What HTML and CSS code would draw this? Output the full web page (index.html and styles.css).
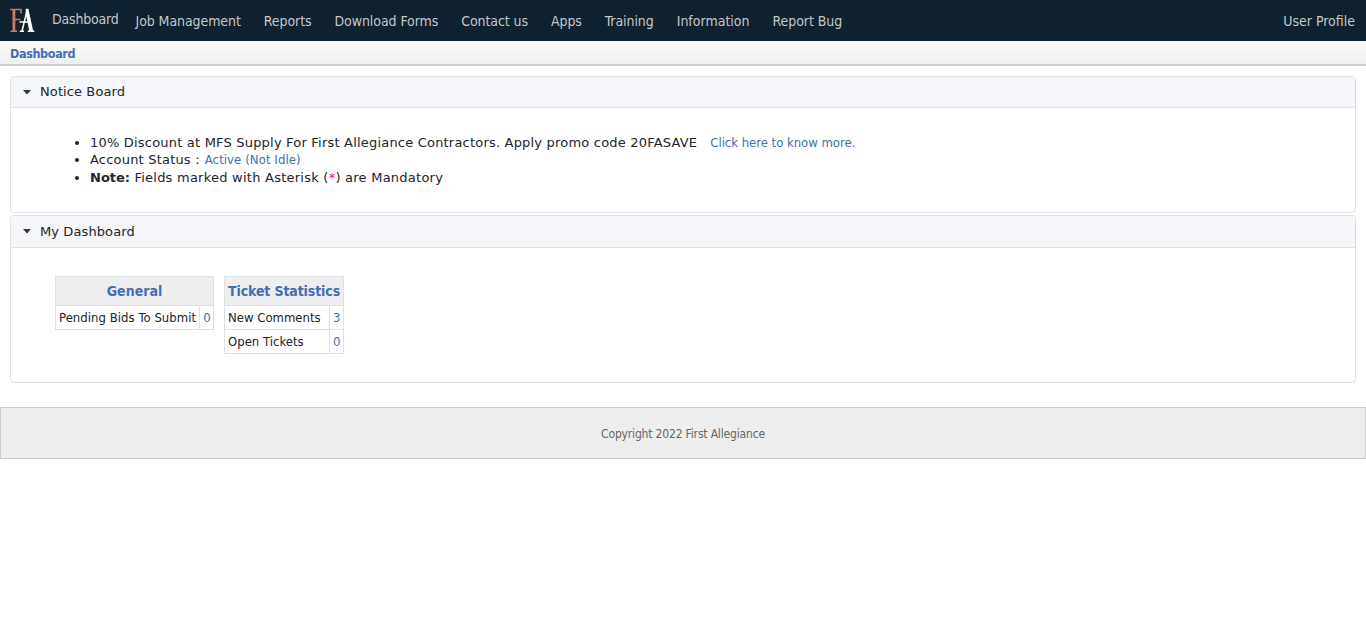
FILE: index.html
```html
<!DOCTYPE html>
<html lang="en">
<head>
<meta charset="utf-8">
<title>Dashboard</title>
<link rel="stylesheet" href="styles.css">
</head>
<body>
<header class="topbar">
  <svg class="logo" viewBox="0 0 26 26" width="26" height="26" aria-label="FA">
    <path d="M1 1.6H12V5.5M1.5 23.3H8M6 11.5H11.5" fill="none" stroke="#c97a5c" stroke-width="1.5"/>
    <path d="M4.9 2V23.5" stroke="#c97a5c" stroke-width="2.9"/>
    <path d="M13 23L18 3M10.8 23.3H15M18.8 23.3H25.3M10.5 14H21" fill="none" stroke="#fff" stroke-width="1.5"/>
    <path d="M16.8 .8H19.4L24.3 23.5H20.4L16.6 5Z" fill="#fff"/>
  </svg>
  <nav class="nav">
    <a class="nav-item active">Dashboard</a>
    <a class="nav-item">Job Management</a>
    <a class="nav-item">Reports</a>
    <a class="nav-item">Download Forms</a>
    <a class="nav-item">Contact us</a>
    <a class="nav-item">Apps</a>
    <a class="nav-item">Training</a>
    <a class="nav-item wide">Information</a>
    <a class="nav-item">Report Bug</a>
  </nav>
  <a class="nav-item wide">User Profile</a>
</header>
<div class="crumb">Dashboard</div>
<main class="content">
  <section class="panel">
    <h2 class="panel-head"><svg class="caret" viewBox="0 0 8 4" width="8" height="4"><path d="M0 0H8L4.5 4H3.5Z" fill="#343a40"/></svg><span>Notice Board</span></h2>
    <ul class="notices">
      <li><span>10% Discount at MFS Supply For First Allegiance Contractors. Apply promo code 20FASAVE</span><a class="link more">Click here to know more.</a></li>
      <li class="status"><span>Account Status :</span><a class="link idle">Active (Not Idle)</a></li>
      <li><b>Note:</b> Fields marked with Asterisk (<span class="star">*</span>) are Mandatory</li>
    </ul>
  </section>
  <section class="panel">
    <h2 class="panel-head tall"><svg class="caret" viewBox="0 0 8 4" width="8" height="4"><path d="M0 0H8L4.5 4H3.5Z" fill="#343a40"/></svg><span>My Dashboard</span></h2>
    <div class="stats">
      <table class="stat general">
        <tr><th colspan="2">General</th></tr>
        <tr><td>Pending Bids To Submit</td><td class="num">0</td></tr>
      </table>
      <table class="stat tickets">
        <tr><th colspan="2">Ticket Statistics</th></tr>
        <tr><td>New Comments</td><td class="num">3</td></tr>
        <tr><td>Open Tickets</td><td class="num">0</td></tr>
      </table>
    </div>
  </section>
</main>
<footer class="footer">Copyright 2022 First Allegiance</footer>
</body>
</html>
```
FILE: styles.css
```css
* { box-sizing: border-box; }
body {
  margin: 0;
  background: #fff;
  color: #212529;
  font-family: "DejaVu Sans Condensed", "DejaVu Sans", sans-serif;
  font-stretch: condensed;
  font-size: 12px;
}
.topbar {
  display: flex;
  align-items: flex-start;
  height: 41px;
  padding: 8px 11px 0 9px;
  background: #10212f;
}
.logo { flex: none; margin-right: 17px; }
.nav { display: flex; flex: 1; gap: 23px; }
.nav-item {
  color: #c3c7ca;
  font-size: 14px;
  letter-spacing: -.08px;
  line-height: 18px;
  padding-top: 4px;
  white-space: nowrap;
}
.wide { letter-spacing: 0; }
.active { padding-top: 2px; margin-right: -6px; letter-spacing: -.2px; }
.crumb {
  height: 25px;
  padding: 1px 0 0 10px;
  background: linear-gradient(#fbfbfb, #f0f0f0);
  border-bottom: 2px solid #ccc;
  color: #426fb3;
  font-size: 12.5px;
  font-weight: bold;
  line-height: 24px;
  letter-spacing: -.38px;
}
.content {
  display: flex;
  flex-direction: column;
  gap: 2px;
  padding: 10px 10px 24px;
}
.panel {
  border: 1px solid #dee2e6;
  border-radius: 4px;
}
.panel-head {
  display: flex;
  align-items: center;
  gap: 9px;
  height: 31px;
  margin: 0;
  padding: 0 0 1px 12px;
  background: #f5f6fa;
  border-bottom: 1px solid #dee2e6;
  border-radius: 3px 3px 0 0;
  font: 13px "DejaVu Sans", sans-serif;
  letter-spacing: .1px;
}
.tall { height: 32px; }
.caret { flex: none; }
.notices {
  height: 104px;
  margin: 0;
  padding: 26px 0 0 79px;
  font: 13px/18px "DejaVu Sans", sans-serif;
}
.notices li { white-space: nowrap; height: 18px; letter-spacing: .2px; }
.notices li:last-child { letter-spacing: .24px; }
.notices b { letter-spacing: 0; }
.notices .status { height: 17px; line-height: 16px; }
.link {
  color: #426fb3;
  font-family: "DejaVu Sans Condensed", "DejaVu Sans", sans-serif;
  font-stretch: condensed;
  font-size: 13px;
  letter-spacing: -.03px;
}
.more { margin-left: 13px; }
.idle { margin-left: 5px; letter-spacing: .08px; }
.star { color: #f06; }
.stats {
  display: flex;
  align-items: flex-start;
  gap: 10px;
  height: 134px;
  padding: 28px 0 0 44px;
}
.stat {
  border-collapse: collapse;
  white-space: nowrap;
}
.general { width: 159px; }
.tickets { width: 120px; }
.stat th, .stat td {
  border: 1px solid #dee2e6;
  padding: 0 3px;
  height: 24px;
  text-align: left;
  font-size: 13px;
}
.general td { letter-spacing: .04px; }
.stat th {
  height: 29px;
  background: #eee;
  color: #426fb3;
  font-size: 14px;
  text-align: center;
}
.tickets th { letter-spacing: -.12px; }
.stat .num { width: 14px; padding-right: 2px; color: #426fb3; }
.footer {
  height: 52px;
  background: #eee;
  border: 1px solid #ccc;
  color: #666;
  text-align: center;
  line-height: 52px;
  letter-spacing: -.17px;
}
```
